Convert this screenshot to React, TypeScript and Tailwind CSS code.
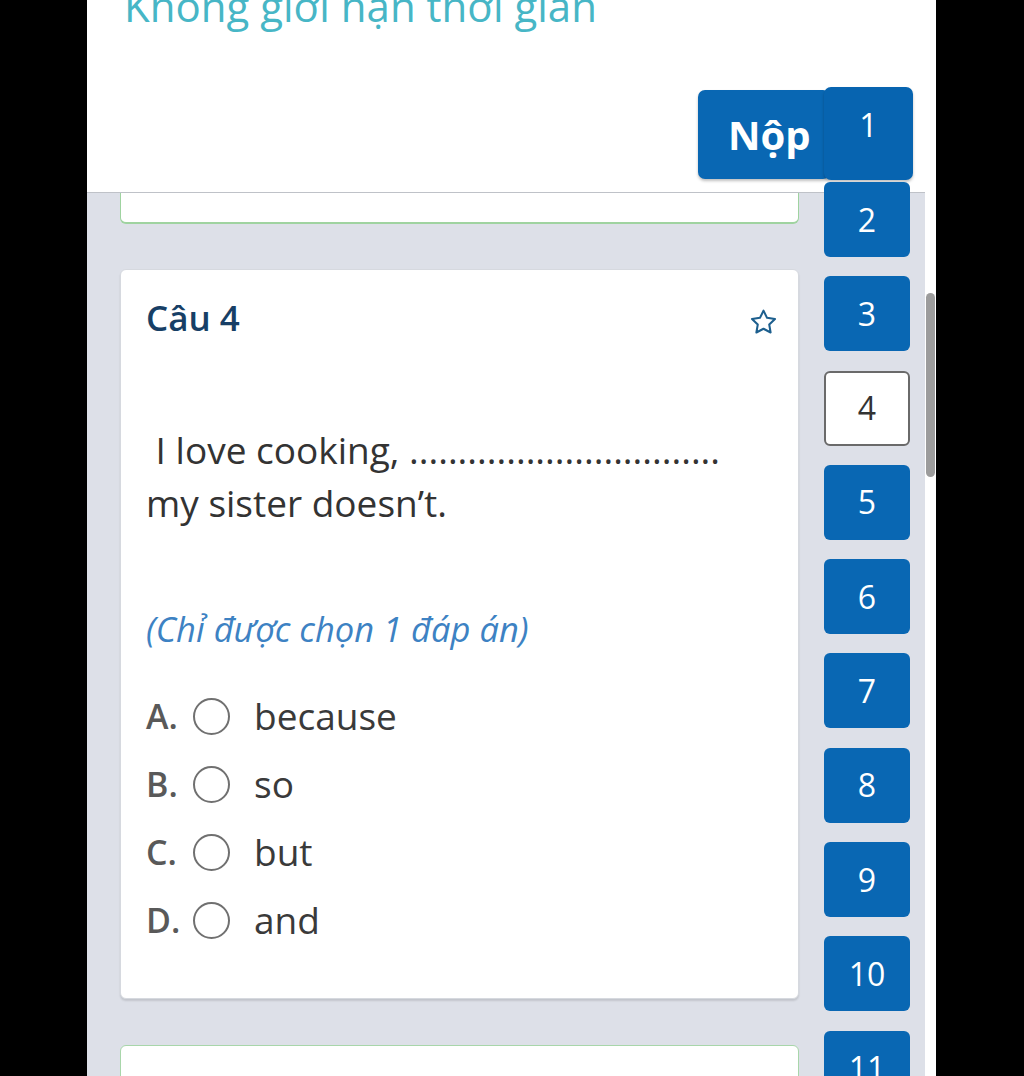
import React from "react";

const font = { fontFamily: '"Open Sans", "Noto Sans", sans-serif' };

function Star() {
  return (
    <svg width="31" height="31" viewBox="0 0 24 24" fill="none" stroke="#1d5f8e" strokeWidth="1.6" strokeLinejoin="round">
      <path d="M12 2.8l2.75 5.6 6.15.9-4.45 4.33 1.05 6.12L12 16.86l-5.5 2.89 1.05-6.12L3.1 9.3l6.15-.9L12 2.8z" />
    </svg>
  );
}

const options = [
  { k: "A.", t: "because" },
  { k: "B.", t: "so" },
  { k: "C.", t: "but" },
  { k: "D.", t: "and" },
];

export default function App() {
  const nums = [2, 3, 4, 5, 6, 7, 8, 9, 10, 11];
  return (
    <div className="w-[1024px] h-[1076px] bg-black flex overflow-hidden" style={font}>
      <div className="w-[87px] shrink-0" />
      <div className="w-[849px] shrink-0 bg-white flex flex-col relative">
        {/* header */}
        <div className="h-[192px] shrink-0 flex flex-col">
          <div className="pl-[37px] mt-[-15px] h-[42px] text-[42px] leading-[42px] text-[#47b6c6] whitespace-nowrap">
            Không giới hạn thời gian
          </div>
          <div className="mt-[63px] ml-[611px] w-[132px] h-[89px] rounded-[7px] bg-[#0967b3] text-white font-bold text-[40px] flex items-center pl-[30px] shadow-[0_2px_3px_rgba(0,0,0,0.25)]">
            Nộp
          </div>
        </div>
        {/* body */}
        <div className="flex-1 flex">
          <div className="w-[838px] bg-[#dde0e8] border-t border-[#bfc2c8] flex flex-col pl-[33px]">
            <div className="w-[679px] h-[31px] bg-white rounded-b-[6px] border-b-2 border-x border-[#9fd3a0]" />
            <div className="mt-[45px] w-[679px] h-[730px] bg-white rounded-[6px] border border-[#d6d9df] shadow-[0_2px_2px_rgba(0,0,0,0.12)] flex flex-col px-[25px] pt-[27px]">
              <div className="h-[42px] flex items-center justify-between">
                <span className="text-[35px] font-semibold text-[#173f66] leading-[42px]">Câu 4</span>
                <span className="mr-[-6px] mt-[8px]"><Star /></span>
              </div>
              <div className="mt-[84px] text-[37px] leading-[53px] text-[#333333]">
                {"\u00a0I love cooking, ................................"}
                <br />
                my sister doesn’t.
              </div>
              <div className="mt-[79px] text-[34.5px] leading-[42px] italic text-[#3d82c3]">
                (Chỉ được chọn 1 đáp án)
              </div>
              <div className="mt-[32px] flex flex-col">
                {options.map((o) => (
                  <div key={o.k} className="h-[68px] flex items-center">
                    <span className="w-[47px] text-[34px] font-semibold text-[#595959]">{o.k}</span>
                    <span className="w-[37px] h-[37px] rounded-full border-2 border-[#707070]" />
                    <span className="ml-[24px] text-[37px] text-[#3a3a3a]">{o.t}</span>
                  </div>
                ))}
              </div>
            </div>
            <div className="mt-[46px] w-[679px] h-[60px] bg-white rounded-t-[6px] border border-[#a8d6aa]" />
          </div>
          <div className="w-[11px] bg-white relative">
            <div className="absolute left-[1px] top-[101px] w-[9px] h-[184px] rounded-full bg-[#9c9c9c]" />
          </div>
        </div>
        {/* floating question navigator */}
        <div className="absolute left-[737px] top-[87px] flex flex-col">
          <div className="w-[89px] h-[93px] rounded-[7px] bg-[#0764b0] text-white text-[32px] leading-[36px] text-center pt-[20px] shadow-[0_2px_3px_rgba(0,0,0,0.25)]">
            1
          </div>
          <div className="flex flex-col gap-[19.3px] mt-[2px]">
            {nums.map((n) => (
              <div
                key={n}
                className={
                  n === 4
                    ? "w-[86px] h-[75px] rounded-[6px] bg-white border-2 border-[#6a6a6a] text-[#333] text-[32px] flex items-center justify-center"
                    : "w-[86px] h-[75px] rounded-[6px] bg-[#0967b3] text-white text-[32px] flex items-center justify-center"
                }
              >
                {n}
              </div>
            ))}
          </div>
        </div>
      </div>
      <div className="flex-1" />
    </div>
  );
}
